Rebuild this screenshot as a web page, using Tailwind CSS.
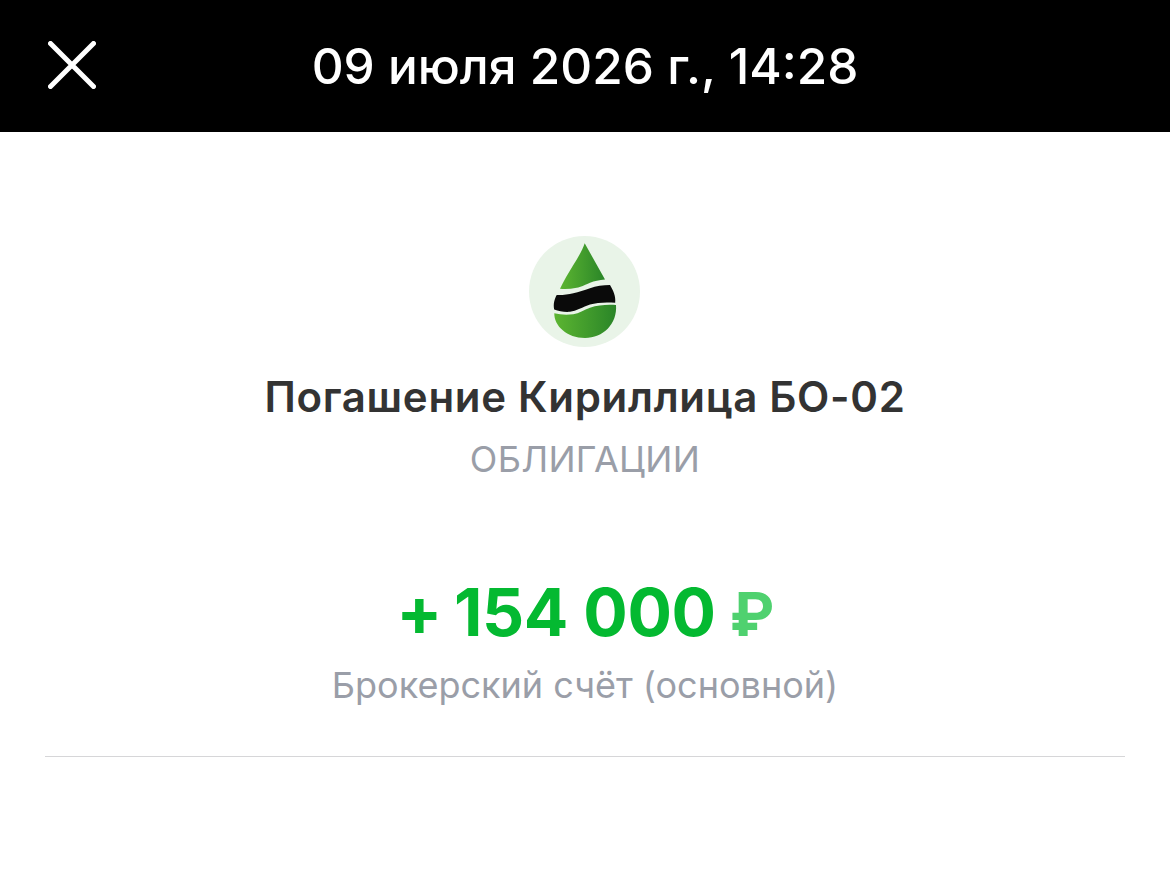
<!DOCTYPE html>
<html lang="ru">
<head>
    <meta charset="UTF-8">
    <meta name="viewport" content="width=device-width, initial-scale=1.0">
    <title>Операция</title>
    <script src="https://cdn.jsdelivr.net/npm/@tailwindcss/browser@4"></script>
</head>
<body class="font-['Inter',sans-serif] bg-white min-h-screen overflow-hidden">
    <!-- Header -->
    <div class="relative h-[132px] bg-black flex items-center justify-center text-white">
        <button class="absolute left-[48px] top-[41px] w-[48px] h-[48px]">
            <svg viewBox="0 0 48 48" class="w-[48px] h-[48px]" fill="none" stroke="white" stroke-width="5" stroke-linecap="round">
                <path d="M2.5 2.5L45.5 45.5M45.5 2.5L2.5 45.5"/>
            </svg>
        </button>
        <div class="pt-[2px] text-[49.5px] leading-none font-medium">09 июля 2026 г., 14:28</div>
    </div>

    <!-- Operation -->
    <div class="flex flex-col items-center pt-[104px]">
        <svg viewBox="0 0 111 111" class="w-[111px] h-[111px] mr-[1px]">
            <defs>
                <linearGradient id="drop" x1="0" y1="0" x2="1" y2="0">
                    <stop offset="0" stop-color="#5cb531"/>
                    <stop offset="1" stop-color="#2a8528"/>
                </linearGradient>
            </defs>
            <circle cx="55.5" cy="55.5" r="55.5" fill="#e9f4e8"/>
            <path d="M55.7 7.3L76 43.5C70 44 65.5 45 61 46.800C55 49.500 52 51 47.700 51.800C42 53 36 53.300 31 52.800C34.500 45 39.500 37 44 29.500C49 21.500 53.500 14 55.700 7.300Z" fill="url(#drop)"/>
            <path d="M27.700 59C33 59.300 39 58.500 44.300 57.300C50 56 55 54.500 61 52.300C67 50 74 49 81 49C84 54 87 60 86.200 66.800C77 66 68 66.500 61 68.500C54 71 47 75 41 75.800C35 76.300 30 75 25.200 73.500C24 68 25.500 63 27.700 59Z" fill="#0a0a0a"/>
            <path d="M25.300 77.300C31 78.800 38 79 44.300 78.300C50 77.300 55 74 61 71.700C69 69 78 68.500 87 69C88.500 88 74 102 56 102C38 102 25 90 25.300 77.300Z" fill="url(#drop)"/>
        </svg>
        <div class="mt-[27px] text-[42px] leading-[46px] font-semibold tracking-[0.7px] text-[#333333]">Погашение Кириллица БО-02</div>
        <div class="mt-[17px] text-[36px] leading-[44px] tracking-[0.3px] text-[#9a9ea8]">ОБЛИГАЦИИ</div>
        <div class="mt-[90px] flex items-baseline text-[66px] leading-[80px] font-bold text-[#04b931] tracking-[-0.4px]">
            <span class="text-[68px]">+</span>
            <span class="ml-[12px]">154 000</span>
            <span class="ml-[14px] text-[60px] text-[#4fd16f]">₽</span>
        </div>
        <div class="mt-[9px] text-[36px] leading-[44px] text-[#9a9ea8]">Брокерский счёт (основной)</div>
    </div>

    <!-- Divider -->
    <div class="mx-[45px] mt-[49px] h-px bg-[#d6d6d8]"></div>
</body>
</html>
